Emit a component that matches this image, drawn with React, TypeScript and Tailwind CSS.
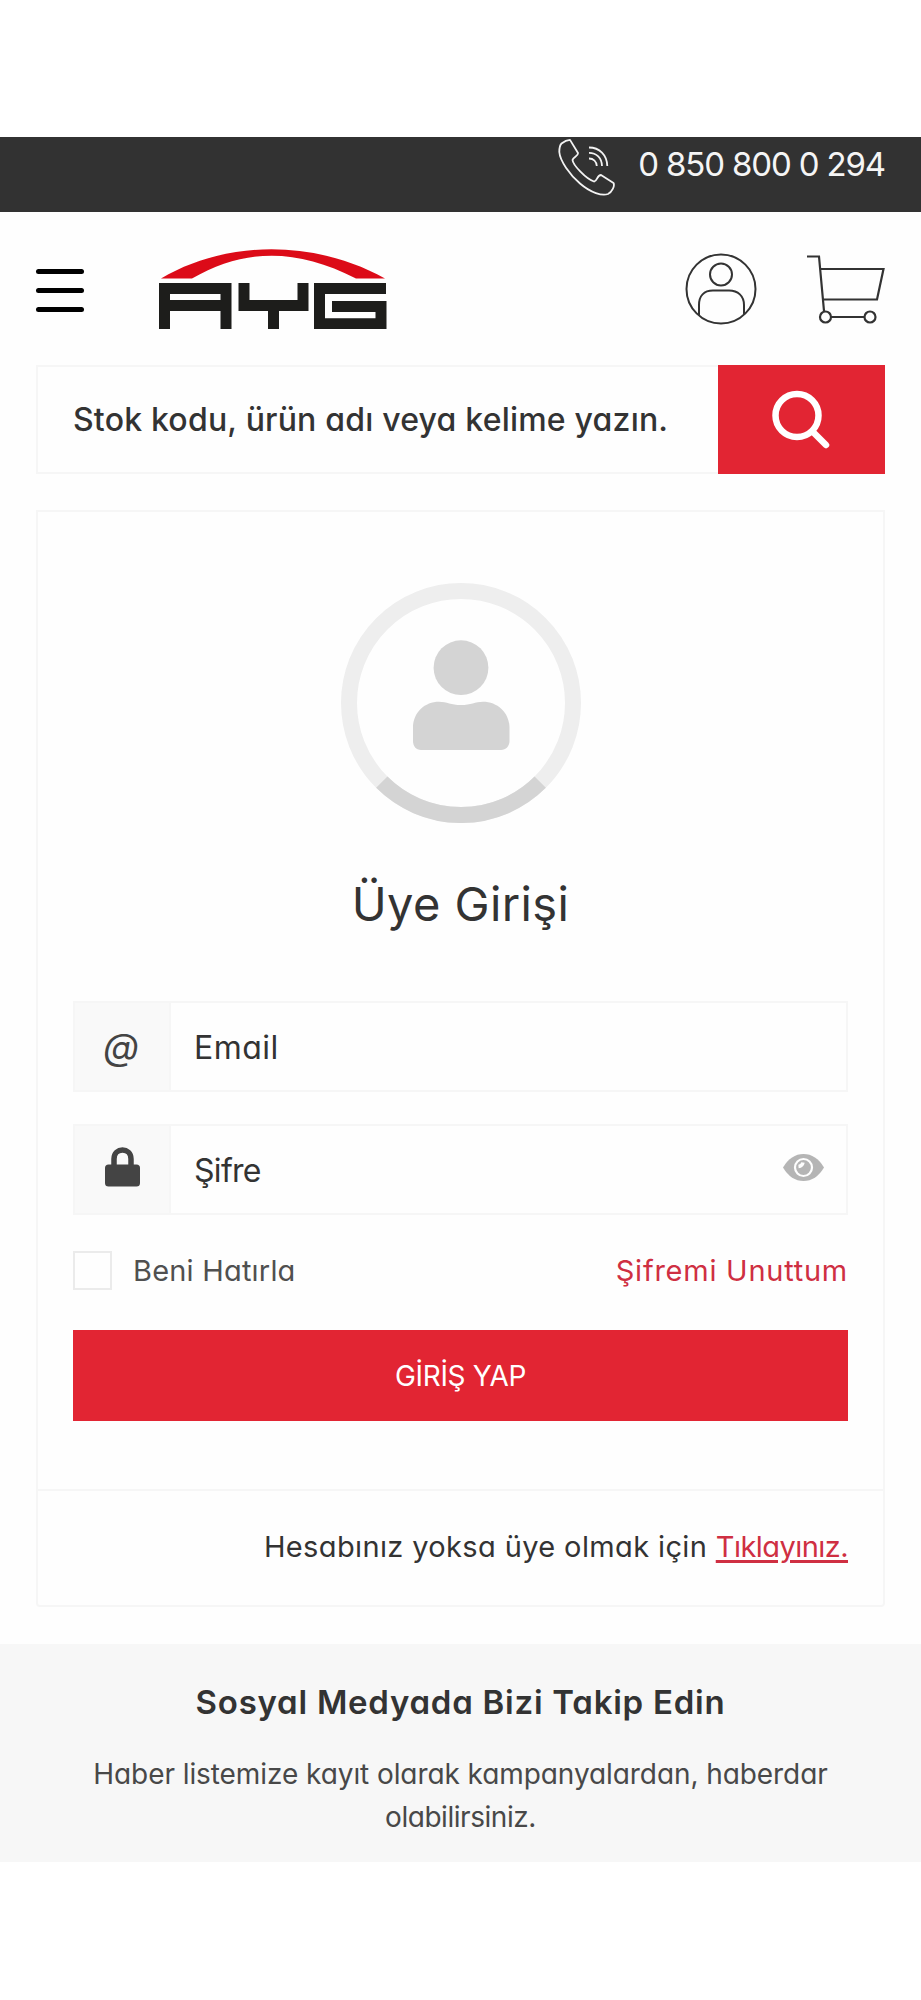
import { useState } from 'react';

function PhoneIcon() {
  return (
    <svg width="58" height="58" viewBox="0 0 58 58" fill="none" stroke="#f3f3f3" strokeWidth="1.8" strokeLinejoin="round">
      <path d="M3.5 4.5C6 2.500 9 1 12 .9L20 14C20.500 17 15 18 14.500 21C15 26 28 40 36 42.500C39 43 39 36 43 36L55.500 44C57 47 54 53 50 55C44 57 33 54 22 44.500C12 36 2 22 1.300 13C1.300 9 1.500 6.500 3.500 4.500Z" />
      <path d="M31 19.500C35.500 19.500 38.500 22.500 38.800 27M31 13.800C38.500 13.800 43.800 19 44 27M31 8.500C41.500 8.500 49 16 49.300 27" />
    </svg>
  );
}

function Logo() {
  return (
    <svg width="228" height="80" viewBox="0 0 228 80">
      <path d="M2 29.500C68 -9.500 156 -9.500 226 29.500H197C138 -1 86 -1 33 29.500Z" fill="#dc0b18" />
      <g fill="none" stroke="#1d1d1b" strokeWidth="11">
        <path d="M5.500 80V39.500H67V80M5.500 56.500H67" />
        <path d="M85 34V56.500H144V34M114.500 56V80" />
        <path d="M227 39.500H160.500V74.800H222V57.500H173" />
      </g>
    </svg>
  );
}

function UserIcon() {
  return (
    <svg width="72" height="72" viewBox="0 0 72 72" fill="none" stroke="#333" strokeWidth="2">
      <circle cx="36" cy="36" r="34.500" />
      <circle cx="36" cy="21.500" r="11" />
      <path d="M14 62V52C14 43 19 37.500 28 37.500H44C53 37.500 59 43 59 52V61" />
    </svg>
  );
}

function CartIcon() {
  return (
    <svg width="78" height="70" viewBox="0 0 78 70" fill="none" stroke="#333" strokeWidth="2.200">
      <path d="M0 2.500H12L17 57M13.500 15H76.500L70 45.500H16M24 63H57" />
      <circle cx="18.500" cy="63" r="5.500" />
      <circle cx="63" cy="63" r="5.500" />
    </svg>
  );
}

function Avatar() {
  return (
    <svg className="mx-auto" width="240" height="240" viewBox="0 0 240 240">
      <circle cx="120" cy="120" r="112" fill="none" stroke="#eeeeee" strokeWidth="16" />
      <path d="M40.800 199.200A112 112 0 0 0 199.200 199.200" fill="none" stroke="#d4d4d4" strokeWidth="16" />
      <g fill="#d4d4d4">
        <circle cx="120" cy="84.700" r="27.400" />
        <path d="M72 145C72 129 84 118.700 98 118.700C106 118.700 110 122 120 122C130 122 134 118.700 142 118.700C156 118.700 168.500 129 168.500 145V158C168.500 163 165 167 160 167H80C75 167 72 163 72 158Z" />
      </g>
    </svg>
  );
}

export default function App() {
  const [email, setEmail] = useState('');
  const [password, setPassword] = useState('');
  const [visible, setVisible] = useState(false);

  return (
    <div className="min-h-[2000px] bg-white pt-[137px] font-['Inter',sans-serif] text-[#333] [font-feature-settings:'cv11']">
      <div className="bg-[#fefefe]">
        <div className="flex h-[75px] items-start justify-end bg-[#323232] pr-9">
          <span className="mr-[22px] mt-0.5">
            <PhoneIcon />
          </span>
          <span className="whitespace-nowrap text-[33px] leading-[55px] tracking-[-1.15px] text-[#f5f5f5]">0 850 800 0 294</span>
        </div>

        <header className="flex h-[153px] items-center px-9">
          <button aria-label="Menü" className="mt-[3px] flex w-12 flex-col gap-[14px]">
            <span className="h-[5px] rounded-full bg-black" />
            <span className="h-[5px] rounded-full bg-black" />
            <span className="h-[5px] rounded-full bg-black" />
          </button>
          <a href="#" aria-label="AYG" className="ml-[75px]">
            <Logo />
          </a>
          <div className="ml-auto flex items-center gap-[50px]">
            <UserIcon />
            <CartIcon />
          </div>
        </header>

        <form className="mx-9 flex h-[109px]">
          <div className="flex flex-1 items-center border-2 border-r-0 border-[#f6f6f6] pl-[35px]">
            <span className="whitespace-nowrap text-[32px] font-medium tracking-[0.2px]">Stok kodu, ürün adı veya kelime yazın.</span>
          </div>
          <button type="button" aria-label="Ara" className="flex w-[167px] items-center justify-center bg-[#e22533] pr-0.5">
            <svg width="58" height="60" viewBox="0 0 58 60" fill="none" stroke="#fff" strokeWidth="6.500" strokeLinecap="round">
              <circle cx="25" cy="25.500" r="21.500" />
              <path d="M41 42L54 55" />
            </svg>
          </button>
        </form>

        <main className="mx-9 mt-9 rounded-b border-2 border-[#f6f6f6]">
          <div className="h-[977px] px-[35px] pt-[71px]">
            <Avatar />
            <h1 className="mt-[49px] text-center text-[47px] leading-[64px] tracking-[0.4px]">
              <span>Üye Girişi</span>
            </h1>

            <div className="mt-[65px] flex h-[91px] border-2 border-[#f6f6f6]">
              <span className="flex w-24 items-center justify-center border-r-2 border-[#f6f6f6] bg-[#f9f9f9] pr-0.5 text-[37px] italic text-[#444]">@</span>
              <input
                className="min-w-0 flex-1 pl-[23px] pt-0.5 text-[32px] tracking-[0.5px] outline-none placeholder:text-[#333]"
                placeholder="Email"
                value={email}
                onChange={(e) => setEmail(e.target.value)}
              />
            </div>

            <div className="mt-8 flex h-[91px] border-2 border-[#f6f6f6]">
              <span className="flex w-24 items-center justify-center border-r-2 border-[#f6f6f6] bg-[#f9f9f9] pb-1.5">
                <svg width="35" height="40" viewBox="0 0 35 40">
                  <path d="M9 20V12C9 0 26 0 26 12V20" fill="none" stroke="#444" strokeWidth="5.500" />
                  <rect y="17.500" width="35" height="22" rx="3.500" fill="#444" />
                </svg>
              </span>
              <input
                className="min-w-0 flex-1 pl-[23px] pt-0.5 text-[32px] tracking-[-0.7px] outline-none placeholder:text-[#333]"
                type={visible ? 'text' : 'password'}
                placeholder="Şifre"
                value={password}
                onChange={(e) => setPassword(e.target.value)}
              />
              <button type="button" aria-label="Şifreyi göster" className="mr-[22px] pb-1" onClick={() => setVisible(!visible)}>
                <svg width="41" height="27" viewBox="0 0 41 27">
                  <path d="M0 13.500Q8 0 20.500 0Q33 0 41 13.500Q33 27 20.500 27Q8 27 0 13.500Z" fill="#b5b5b5" />
                  <circle cx="20.500" cy="13.500" r="8.500" fill="#b5b5b5" stroke="#fefefe" strokeWidth="2.200" />
                  <path d="M15.500 12.500A5 5 0 0 0 20 8.500" fill="none" stroke="#fefefe" strokeWidth="3.500" />
                </svg>
              </button>
            </div>

            <div className="mt-[35px] flex h-10 items-center justify-between">
              <label className="flex items-center text-[#505050]">
                <span className="mr-[21px] size-[39px] border-2 border-[#ebebeb]" />
                <span className="pt-0.5 text-[29px] tracking-[0.2px]">Beni Hatırla</span>
              </label>
              <a href="#" className="pt-0.5 text-[29px] tracking-[0.75px] text-[#cf2f42]">Şifremi Unuttum</a>
            </div>

            <button type="button" className="mt-10 h-[91px] w-full bg-[#e22533] text-[28px] tracking-[-0.3px] text-white">
              <span>GİRİŞ YAP</span>
            </button>
          </div>

          <div className="h-[116px] whitespace-nowrap border-t-2 border-[#f6f6f6] pr-[35px] pt-9 text-right text-[29px] leading-[40px]">
            <span className="tracking-[0.37px]">Hesabınız yoksa üye olmak için </span>
            <a href="#" className="tracking-[-0.55px] text-[#cf2f42] underline decoration-[3px] underline-offset-[3px]">Tıklayınız.</a>
          </div>
        </main>

        <footer className="mt-[37px] h-[218px] bg-[#f7f7f7] pt-9 text-center">
          <h2 className="text-[33px] font-semibold leading-[44px] tracking-[0.75px]">
            <span>Sosyal Medyada Bizi Takip Edin</span>
          </h2>
          <p className="mt-[29px] text-[28px] leading-[43px] text-[#484848]">
            <span className="tracking-[-0.08px]">Haber listemize kayıt olarak kampanyalardan, haberdar</span>
            <br />
            <span className="tracking-[-0.45px]">olabilirsiniz.</span>
          </p>
        </footer>
      </div>
    </div>
  );
}
